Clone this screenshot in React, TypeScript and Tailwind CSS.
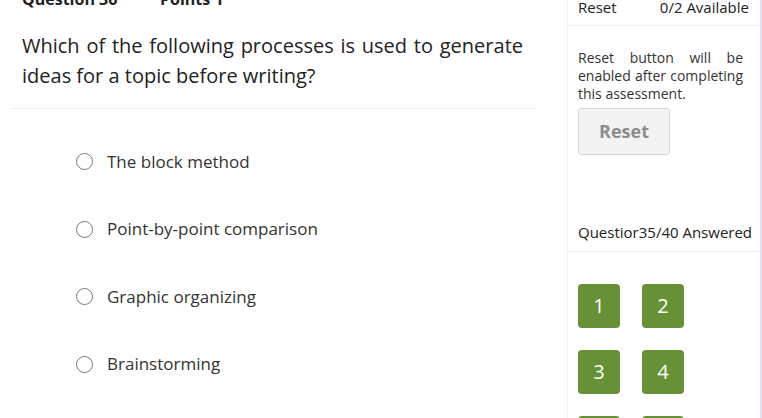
export default function App() {
  const options = [
    "The block method",
    "Point-by-point comparison",
    "Graphic organizing",
    "Brainstorming",
  ];
  const nums = [1, 2, 3, 4, 5, 6];

  return (
    <div className="w-[762px] h-[418px] overflow-hidden bg-white flex font-['Open_Sans',sans-serif]">
      {/* question area */}
      <div className="w-[567px] shrink-0">
        <div className="-mt-[13px] h-[24px] flex items-center pl-[22px] text-[16px] font-bold text-[#222]">
          <span className="w-[138px]">Question 36</span>
          <span>Points 1</span>
        </div>
        <p className="mt-[20px] pl-[22px] pr-[44px] text-[20px] leading-[30px] text-[#222] text-justify">
          Which of the following processes is used to generate ideas for a topic before writing?
        </p>
        <div className="mt-[17px] ml-[10px] w-[526px] h-px bg-[#ececec]" />
        <div className="mt-[44px] flex flex-col gap-[50.5px] pl-[76px]">
          {options.map((o) => (
            <label key={o} className="flex items-center h-[17px]">
              <span className="w-[17px] h-[17px] rounded-full border-[1.5px] border-[#777] bg-white" />
              <span className="ml-[14px] text-[17px] text-[#333]">{o}</span>
            </label>
          ))}
        </div>
      </div>

      {/* sidebar */}
      <div className="w-[193px] shrink-0 border-l border-[#eeeeee]">
        <div className="-mt-[10px] h-[36px] flex items-center justify-between pl-[10px] pr-[11px] border-b border-[#efefef] text-[15px] text-[#222]">
          <span>Reset</span>
          <span>0/2 Available</span>
        </div>
        <p className="mt-[23px] pl-[10px] pr-[17px] text-[14px] leading-[18px] text-[#333] text-justify">
          Reset button will be enabled after completing this assessment.
        </p>
        <button className="block mt-[5px] ml-[10px] w-[92px] h-[47px] rounded-[3px] border border-[#d6d6d6] bg-[#f3f3f3] text-[18px] font-bold text-[#8c8c8c]">
          Reset
        </button>
        <div className="mt-[67px] pl-[10px] h-[20px] flex items-center text-[15px] text-[#222] whitespace-nowrap">
          Questior35/40 Answered
        </div>
        <div className="mt-[9px] h-px bg-[#eeeeee]" />
        <div className="mt-[32px] pl-[10px] grid grid-cols-[42px_42px] gap-x-[22px] gap-y-[22px]">
          {nums.map((n) => (
            <div
              key={n}
              className="h-[44px] rounded-[4px] bg-[#679137] text-white text-[20px] flex items-center justify-center"
            >
              {n}
            </div>
          ))}
        </div>
      </div>
      <div className="w-[2px] shrink-0 bg-[#e8def8]" />
    </div>
  );
}
